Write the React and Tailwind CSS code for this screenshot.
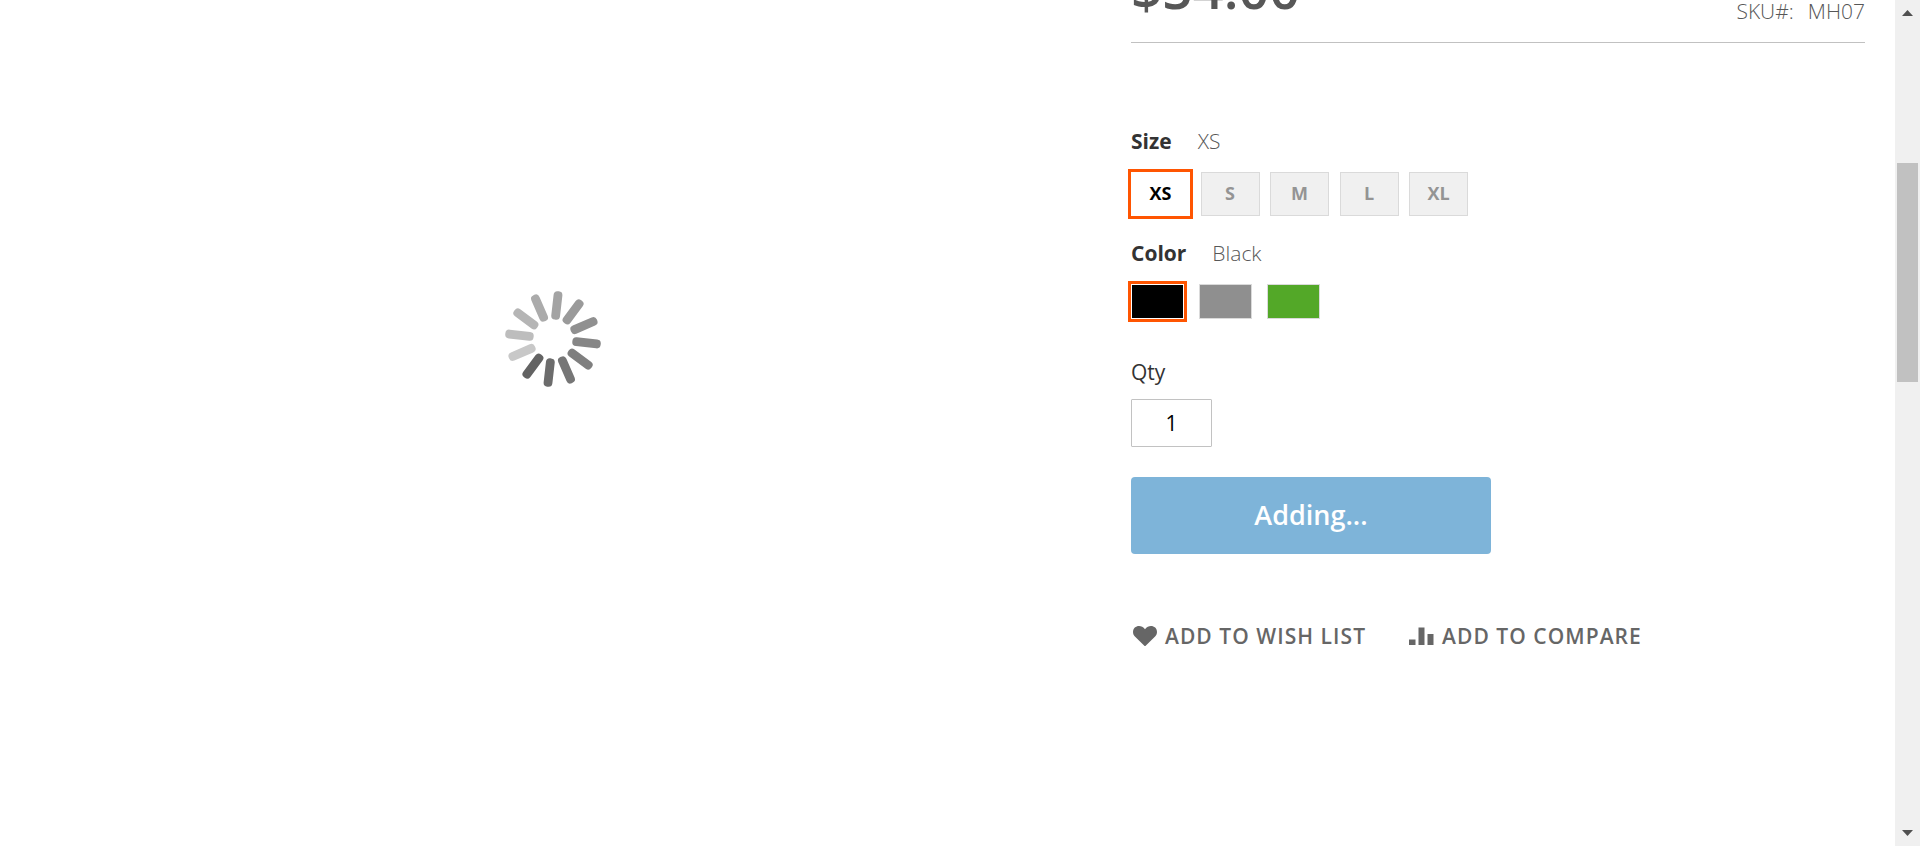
import { useState } from "react";

const SIZES = ["XS", "S", "M", "L", "XL"];

const COLORS = [
  { name: "Black", fill: "bg-black" },
  { name: "Gray", fill: "bg-[#8f8f8f]" },
  { name: "Green", fill: "bg-[#53a828]" },
];

const SPOKES = [
  "#a3a3a3", "#9a9a9a", "#909090", "#868686", "#7f7f7f", "#767676",
  "#6c6c6c", "#636363", "#c8c8c8", "#bdbdbd", "#b5b5b5", "#ababab",
];

function Spinner() {
  return (
    <svg className="size-24" viewBox="-48 -48 96 96" role="img" aria-label="Loading">
      {SPOKES.map((color, i) => (
        <rect
          key={color}
          x="-4.4"
          y="-48"
          width="8.8"
          height="28.5"
          rx="4"
          fill={color}
          transform={`rotate(${6.5 + i * 30})`}
        />
      ))}
    </svg>
  );
}

function HeartIcon() {
  return (
    <svg className="h-5 w-6" viewBox="0 0 24 20" fill="currentColor" aria-hidden="true">
      <path d="M12 20.4 1.9 10.6C-.7 7.900-.5 3.800 1.800 1.600 4.600-.9 9.200-.5 12 3.200 14.800-.5 19.400-.9 22.200 1.600c2.300 2.200 2.500 6.300-.1 9Z" />
    </svg>
  );
}

function CompareIcon() {
  return (
    <svg className="h-5 w-[25px]" viewBox="0 0 25 20" fill="currentColor" aria-hidden="true">
      <path d="M0 13.500h6.500V19H0zM9.500 1.500h6V19h-6zM18.500 8h6v11h-6z" />
    </svg>
  );
}

function OptionLabel({ name, value }) {
  return (
    <div className="flex gap-[26px]">
      <span className="font-bold text-[#333333]">{name}</span>
      <span className="font-light">{value}</span>
    </div>
  );
}

function Scrollbar() {
  return (
    <div className="sticky top-0 flex h-screen w-[25px] shrink-0 flex-col items-center bg-[#f0f0f0]" aria-hidden="true">
      <svg className="mt-[10px] h-[6px] w-[11px]" viewBox="0 0 11 6" fill="#505050">
        <path d="M5.500 0 11 6H0z" />
      </svg>
      <div className="flex min-h-0 w-full flex-1 flex-col items-center">
        <div className="h-[18%]" />
        <div className="h-[27%] w-[21px] bg-[#c1c1c1]" />
      </div>
      <svg className="mb-[10px] h-[6px] w-[11px]" viewBox="0 0 11 6" fill="#505050">
        <path d="M0 0h11L5.500 6z" />
      </svg>
    </div>
  );
}

export default function App() {
  const [size, setSize] = useState("XS");
  const [color, setColor] = useState("Black");
  const [qty, setQty] = useState("1");

  return (
    <div className="flex min-h-screen bg-white font-['Open_Sans',sans-serif] text-[21px] leading-7 text-[#575757]">
      <main className="flex min-w-0 flex-1 items-start justify-between px-[30px]">
        <section className="flex w-[57%] justify-center pt-[291px]" aria-label="Product gallery">
          <Spinner />
        </section>

        <section className="w-2/5" aria-label="Product details">
          <div className="flex h-[43px] items-end justify-between border-b border-[#c1c1c1]">
            <div className="pb-[27px] text-[54px] leading-none font-semibold">$54.00</div>
            <dl className="flex gap-[14px] pb-[17px] font-light">
              <dt>SKU#:</dt>
              <dd>MH07</dd>
            </dl>
          </div>

          <div className="mt-[84px]">
            <OptionLabel name="Size" value={size} />
            <div className="mt-[17px] flex w-[337px] justify-between" role="group" aria-label="Size">
              {SIZES.map((s) => (
                <button
                  key={s}
                  type="button"
                  aria-pressed={s === size}
                  onClick={() => setSize(s)}
                  className={
                    s === size
                      ? "h-[44px] w-[59px] border border-white bg-white pb-[2px] text-[18px] leading-6 font-bold text-black outline-3 outline-[#ff5501]"
                      : "h-[44px] w-[59px] border border-[#dadada] bg-[#f0f0f0] pb-[2px] text-[18px] leading-6 font-bold text-[#949494]"
                  }
                >
                  {s}
                </button>
              ))}
            </div>
          </div>

          <div className="mt-[23px]">
            <OptionLabel name="Color" value={color} />
            <div className="mt-[17px] flex gap-[15px]" role="group" aria-label="Color">
              {COLORS.map((c) => (
                <button
                  key={c.name}
                  type="button"
                  aria-label={c.name}
                  aria-pressed={c.name === color}
                  onClick={() => setColor(c.name)}
                  className={
                    c.name === color
                      ? `h-[35px] w-[53px] border border-white outline-3 outline-[#ff5501] ${c.fill}`
                      : `h-[35px] w-[53px] border border-[#dadada] ${c.fill}`
                  }
                />
              ))}
            </div>
          </div>

          <form className="mt-[39px]" onSubmit={(e) => e.preventDefault()}>
            <label htmlFor="qty" className="block font-medium text-[#333333]">
              Qty
            </label>
            <input
              id="qty"
              inputMode="numeric"
              value={qty}
              onChange={(e) => setQty(e.target.value)}
              className="mt-[13px] block h-12 w-[81px] rounded-[1px] border border-[#c2c2c2] text-center text-black"
            />
            <button
              type="submit"
              disabled
              className="mt-[30px] block h-[77px] w-[360px] rounded-[4px] bg-[#006bb4] pb-[2px] text-[27px] font-semibold text-white opacity-50"
            >
              Adding...
            </button>
          </form>

          <div className="mt-[68px] flex gap-[43px] font-semibold tracking-wider text-[#666666] uppercase">
            <a href="#wishlist" className="flex items-center gap-2 pl-[2px]">
              <HeartIcon />
              Add to Wish List
            </a>
            <a href="#compare" className="flex items-center gap-2">
              <CompareIcon />
              Add to Compare
            </a>
          </div>
        </section>
      </main>
      <Scrollbar />
    </div>
  );
}
